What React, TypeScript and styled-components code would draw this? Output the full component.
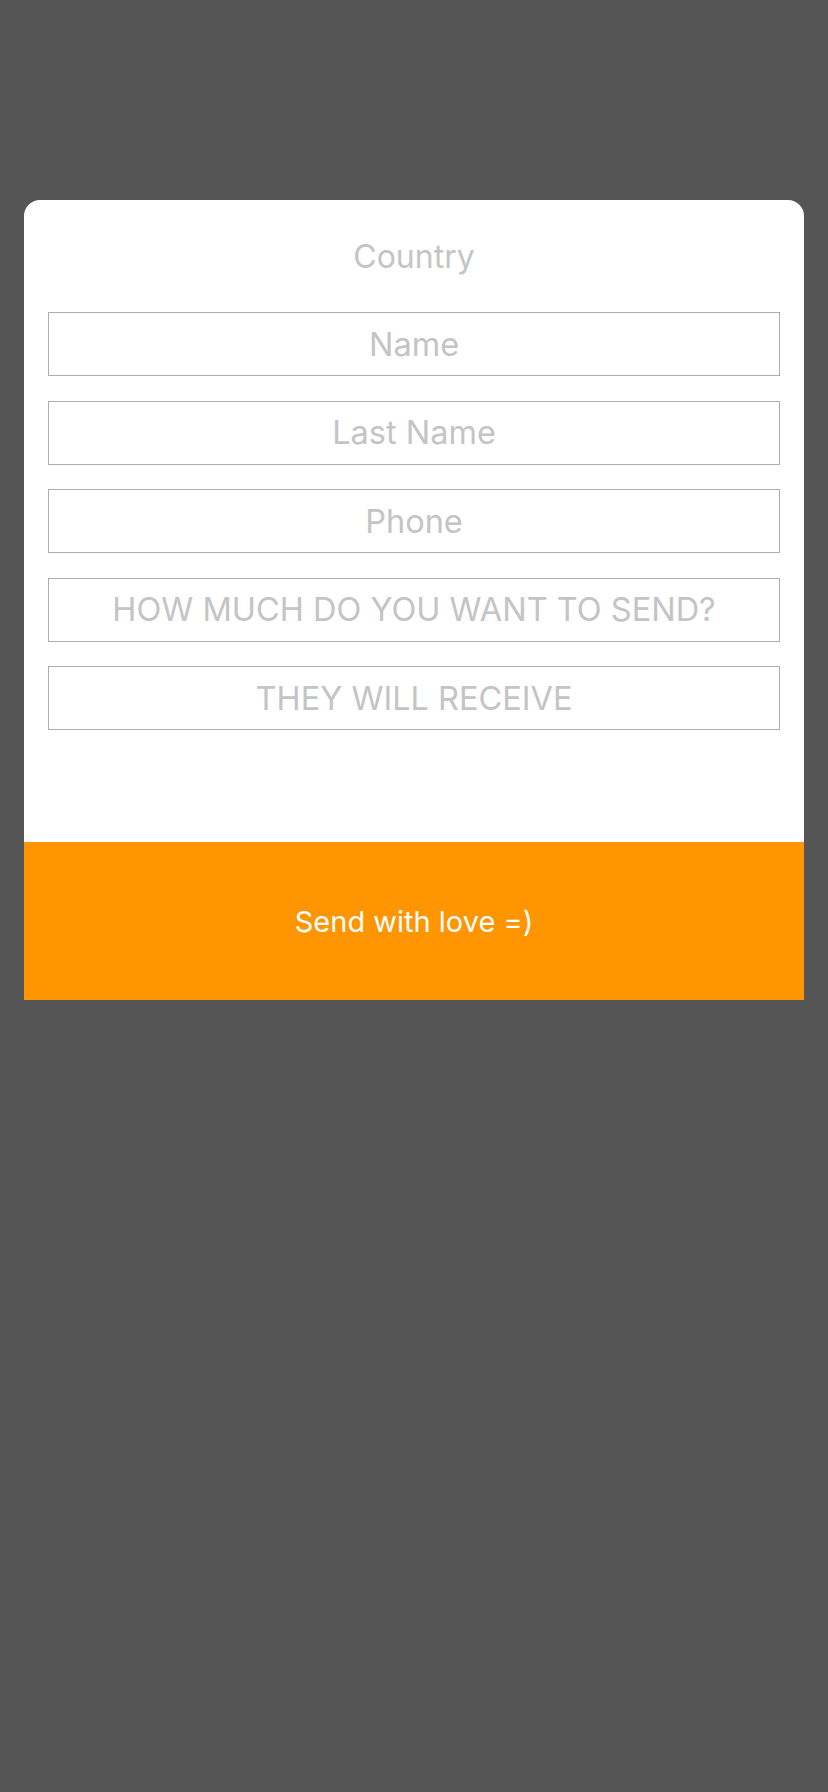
import React from "react";
import styled, { createGlobalStyle } from "styled-components";

const GlobalStyle = createGlobalStyle`
  html, body {
    margin: 0;
    padding: 0;
    background: #555555;
    min-height: 100%;
  }
  body {
    font-family: Inter, "Noto Sans", "Liberation Sans", sans-serif;
  }
  * { box-sizing: border-box; }
`;

const Page = styled.div`
  min-height: 1792px;
  background: #555555;
  padding: 200px 24px 0;
`;

const Card = styled.div`
  background: #ffffff;
  border-radius: 16px 16px 0 0;
  overflow: hidden;
  display: flex;
  flex-direction: column;
`;

const CountryPicker = styled.button`
  height: 112px;
  border: none;
  background: transparent;
  display: flex;
  align-items: center;
  justify-content: center;
  font-family: inherit;
  font-size: 32px;
  font-weight: 400;
  color: #c4c4c4;
  padding: 0;
  cursor: pointer;
`;

const Fields = styled.div`
  display: flex;
  flex-direction: column;
  gap: 24.5px;
  padding: 0 24px 112px;
`;

const Field = styled.input`
  height: 64px;
  width: 100%;
  border: 1.5px solid #adadad;
  border-radius: 0;
  background: #ffffff;
  text-align: center;
  font-family: inherit;
  font-size: 32.5px;
  color: #333;
  outline: none;
  padding: 0 8px;
  &::placeholder {
    color: #c4c4c4;
    opacity: 1;
  }
`;

const SendButton = styled.button`
  height: 158px;
  border: none;
  background: #ff9500;
  color: #ffffff;
  font-family: inherit;
  font-size: 29px;
  font-weight: 400;
  display: flex;
  align-items: center;
  justify-content: center;
  padding: 0;
  cursor: pointer;
`;

const fields = [
  "Name",
  "Last Name",
  "Phone",
  "HOW MUCH DO YOU WANT TO SEND?",
  "THEY WILL RECEIVE",
];

export default function App() {
  return (
    <>
      <GlobalStyle />
      <Page>
        <Card>
          <CountryPicker type="button">Country</CountryPicker>
          <Fields>
            {fields.map((f) => (
              <Field key={f} placeholder={f} />
            ))}
          </Fields>
          <SendButton type="button">Send with love =)</SendButton>
        </Card>
      </Page>
    </>
  );
}
